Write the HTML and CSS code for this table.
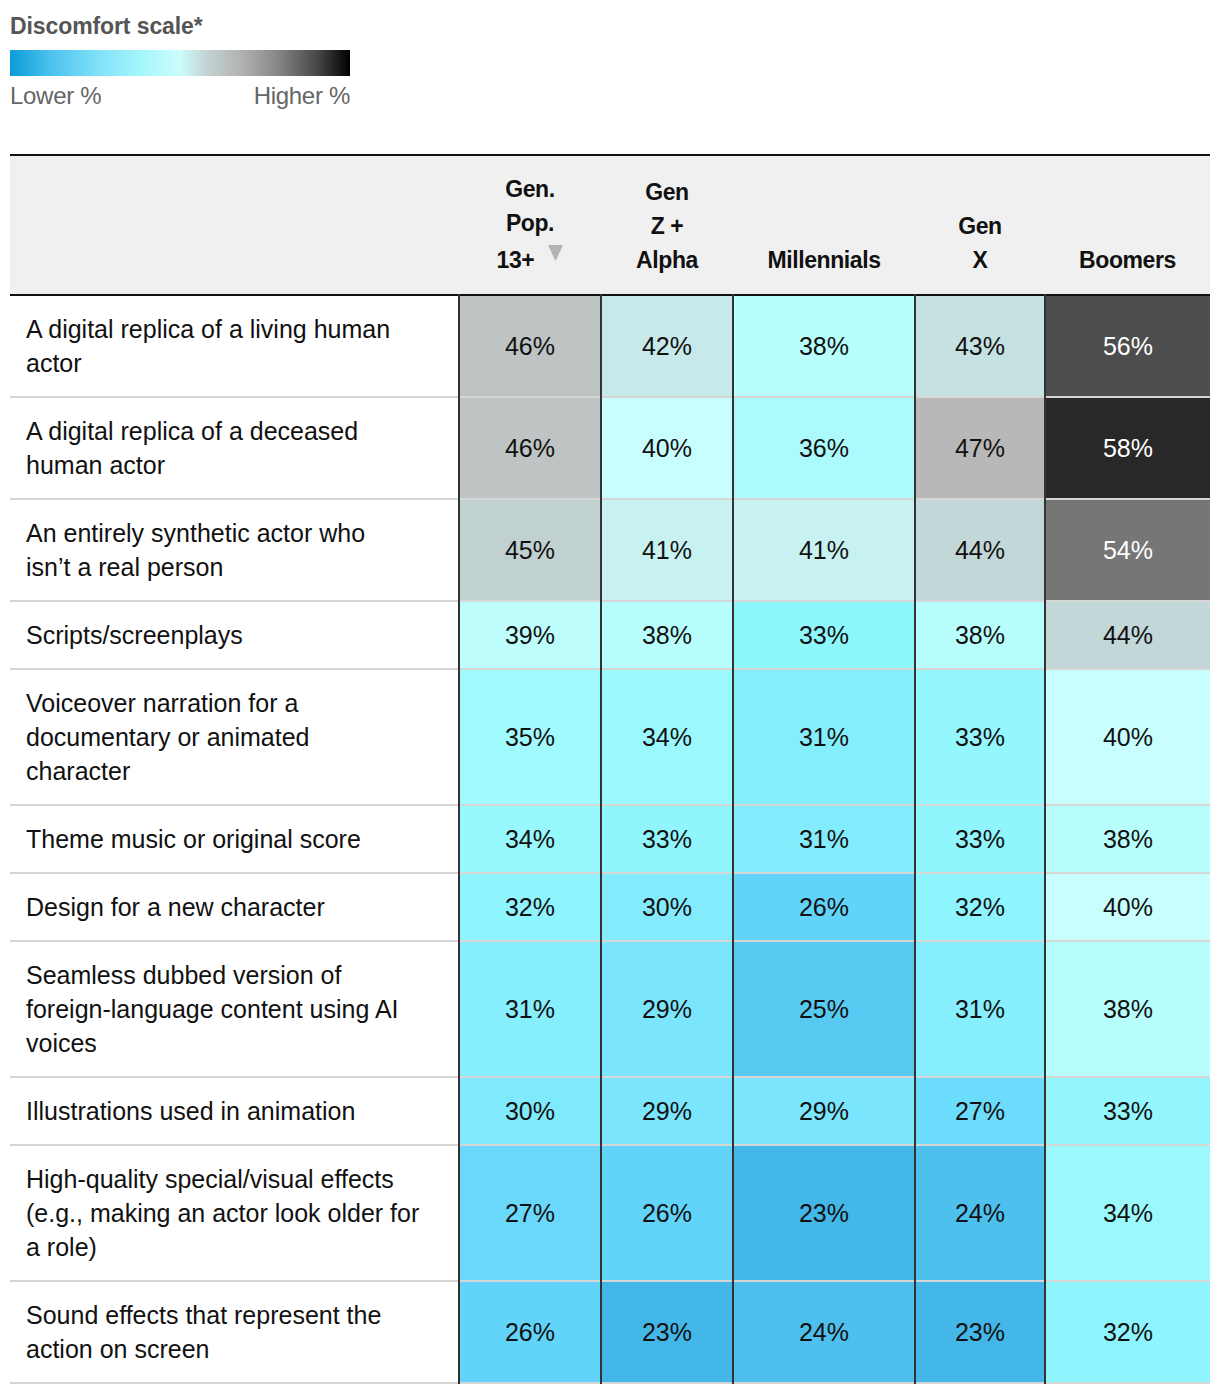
FILE: index.html
```html
<!DOCTYPE html>
<html lang="en">
<head>
<meta charset="utf-8">
<title>Discomfort scale</title>
<link rel="stylesheet" href="styles.css">
</head>
<body>
<div class="page">
  <div class="legend">
    <div class="legend-title">Discomfort scale*</div>
    <div class="legend-bar"></div>
    <div class="legend-labels"><span>Lower %</span><span>Higher %</span></div>
  </div>

  <table class="heat">
    <colgroup>
      <col class="c-label"><col class="c1"><col class="c2"><col class="c3"><col class="c4"><col class="c5">
    </colgroup>
    <thead>
      <tr>
        <th class="h-label"></th>
        <th>Gen.<br>Pop.<br><span class="sorted">13+<svg class="sort-arrow" width="15" height="16" viewBox="0 0 15 16"><polygon points="0,0 15,0 7.5,16" fill="#b3b3b3"/></svg></span></th>
        <th>Gen<br>Z +<br>Alpha</th>
        <th>Millennials</th>
        <th>Gen<br>X</th>
        <th>Boomers</th>
      </tr>
    </thead>
    <tbody>
      <tr>
        <td class="label">A digital replica of a living human<br>actor</td>
        <td class="num" style="background:#bec4c4">46%</td>
        <td class="num" style="background:#c8e9e9">42%</td>
        <td class="num" style="background:#b8fefc">38%</td>
        <td class="num" style="background:#c6e1e1">43%</td>
        <td class="num dark" style="background:#4d4d4d">56%</td>
      </tr>
      <tr>
        <td class="label">A digital replica of a deceased<br>human actor</td>
        <td class="num" style="background:#bec4c4">46%</td>
        <td class="num" style="background:#c9fefe">40%</td>
        <td class="num" style="background:#abfbfc">36%</td>
        <td class="num" style="background:#b8b8b8">47%</td>
        <td class="num dark" style="background:#282828">58%</td>
      </tr>
      <tr>
        <td class="label">An entirely synthetic actor who<br>isn’t a real person</td>
        <td class="num" style="background:#c1d1d1">45%</td>
        <td class="num" style="background:#c8f2f2">41%</td>
        <td class="num" style="background:#c8f2f2">41%</td>
        <td class="num" style="background:#c2d8d8">44%</td>
        <td class="num dark" style="background:#767676">54%</td>
      </tr>
      <tr>
        <td class="label">Scripts/screenplays</td>
        <td class="num" style="background:#bdfefd">39%</td>
        <td class="num" style="background:#b8fefc">38%</td>
        <td class="num" style="background:#8ef7fc">33%</td>
        <td class="num" style="background:#b8fefc">38%</td>
        <td class="num" style="background:#c2d8d8">44%</td>
      </tr>
      <tr>
        <td class="label">Voiceover narration for a<br>documentary or animated<br>character</td>
        <td class="num" style="background:#a1fafd">35%</td>
        <td class="num" style="background:#9bf9fd">34%</td>
        <td class="num" style="background:#85eefd">31%</td>
        <td class="num" style="background:#94f7fd">33%</td>
        <td class="num" style="background:#c9fefe">40%</td>
      </tr>
      <tr>
        <td class="label">Theme music or original score</td>
        <td class="num" style="background:#97f8fd">34%</td>
        <td class="num" style="background:#90f5fd">33%</td>
        <td class="num" style="background:#82ecfc">31%</td>
        <td class="num" style="background:#90f5fd">33%</td>
        <td class="num" style="background:#b8fefc">38%</td>
      </tr>
      <tr>
        <td class="label">Design for a new character</td>
        <td class="num" style="background:#8ef4fd">32%</td>
        <td class="num" style="background:#84ebfc">30%</td>
        <td class="num" style="background:#62d4f9">26%</td>
        <td class="num" style="background:#8ef4fd">32%</td>
        <td class="num" style="background:#c9fefe">40%</td>
      </tr>
      <tr>
        <td class="label">Seamless dubbed version of<br>foreign-language content using AI<br>voices</td>
        <td class="num" style="background:#86eefd">31%</td>
        <td class="num" style="background:#7ae5fd">29%</td>
        <td class="num" style="background:#58caf2">25%</td>
        <td class="num" style="background:#86eefd">31%</td>
        <td class="num" style="background:#b8fefc">38%</td>
      </tr>
      <tr>
        <td class="label">Illustrations used in animation</td>
        <td class="num" style="background:#80eafd">30%</td>
        <td class="num" style="background:#7ae5fd">29%</td>
        <td class="num" style="background:#7ae5fd">29%</td>
        <td class="num" style="background:#6cdcfc">27%</td>
        <td class="num" style="background:#94f7fd">33%</td>
      </tr>
      <tr>
        <td class="label">High-quality special/visual effects<br>(e.g., making an actor look older for<br>a role)</td>
        <td class="num" style="background:#6ad8fb">27%</td>
        <td class="num" style="background:#62d4f9">26%</td>
        <td class="num" style="background:#42b7e8">23%</td>
        <td class="num" style="background:#4dc0ed">24%</td>
        <td class="num" style="background:#9bf9fd">34%</td>
      </tr>
      <tr>
        <td class="label">Sound effects that represent the<br>action on screen</td>
        <td class="num" style="background:#62d4f9">26%</td>
        <td class="num" style="background:#42b7e8">23%</td>
        <td class="num" style="background:#4dc0ed">24%</td>
        <td class="num" style="background:#42b7e8">23%</td>
        <td class="num" style="background:#8ef4fd">32%</td>
      </tr>
    </tbody>
  </table>
</div>
</body>
</html>
```

FILE: styles.css
```css
html, body {
  margin: 0;
  padding: 0;
  background: #ffffff;
}

body {
  font-family: "Liberation Sans", Arial, sans-serif;
  color: #111111;
}

.page {
  padding: 13px 10px 0 10px;
}

.legend {
  width: 340px;
}

.legend-title {
  font-size: 23px;
  font-weight: bold;
  line-height: 26px;
  color: #555555;
  letter-spacing: -0.1px;
}

.legend-bar {
  margin-top: 11px;
  height: 26px;
  background: linear-gradient(to right,
    #0b9bd7 0%,
    #4cc2ee 12%,
    #7ddff8 25%,
    #a2f6fb 38%,
    #ccfdfd 50%,
    #c3d2d2 58%,
    #b2b2b2 68%,
    #8a8a8a 78%,
    #4a4a4a 90%,
    #000000 100%);
}

.legend-labels {
  margin-top: 7px;
  display: flex;
  justify-content: space-between;
  font-size: 24px;
  line-height: 26px;
  color: #666666;
  letter-spacing: -0.3px;
}

.heat {
  margin-top: 45px;
  width: 1200px;
  table-layout: fixed;
  border-collapse: collapse;
  border-top: 2px solid #111111;
  border-bottom: 2px solid #d6d6d6;
}

.c-label { width: 449px; }
.c1 { width: 142px; }
.c2 { width: 132px; }
.c3 { width: 182px; }
.c4 { width: 130px; }
.c5 { width: 165px; }

.heat thead tr {
  height: 140px;
  background: #f0f0f0;
  border-bottom: 2px solid #111111;
}

.heat th {
  vertical-align: bottom;
  text-align: center;
  font-size: 23px;
  font-weight: bold;
  line-height: 34px;
  padding: 0 4px 17px 4px;
  color: #111111;
  letter-spacing: -0.4px;
}

.sorted {
  display: inline-block;
  padding-top: 3px;
  white-space: nowrap;
}

.sort-arrow {
  margin-left: 14px;
  vertical-align: 7px;
}

.heat tbody tr {
  border-bottom: 2px solid #d6d6d6;
}

.label {
  font-size: 25px;
  line-height: 34px;
  padding: 16px 16px 16px 16px;
  color: #111111;
  vertical-align: middle;
}

.num {
  border-left: 2px solid #333333;
  text-align: center;
  vertical-align: middle;
  font-size: 25px;
  line-height: 34px;
  padding: 0;
  color: #111111;
}

.num.dark {
  color: #ffffff;
}
```
